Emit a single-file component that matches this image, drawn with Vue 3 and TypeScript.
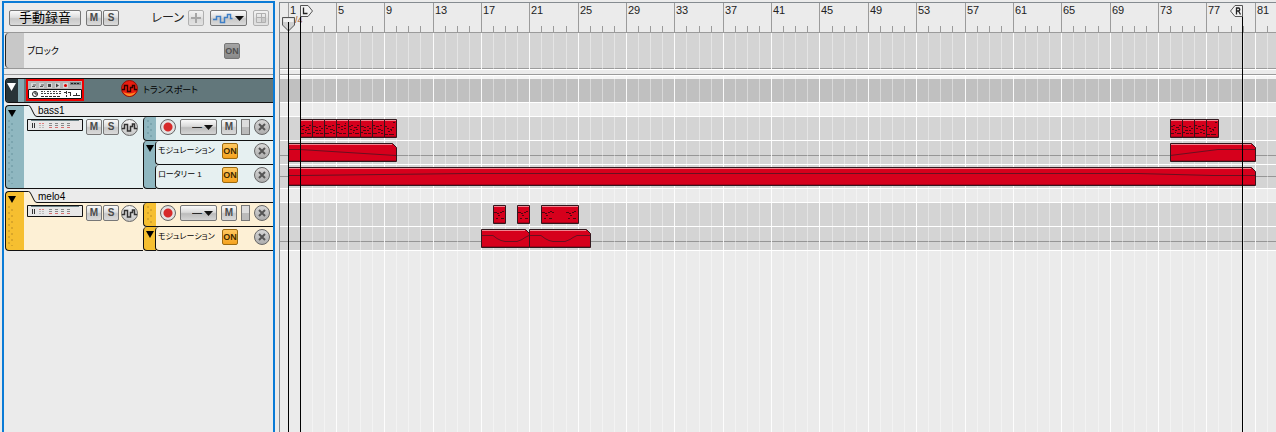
<script setup lang="ts">
interface Lane { label: string; on: boolean }
interface Track { id: string; name: string; tone: string; lanes: Lane[] }
interface Clip { from: number; to: number; notes?: number[][]; curve?: number[][]; cut?: boolean }
interface Row { kind: string; clips: Clip[]; axis?: string }

const BAR = 12.09
const ORIGIN = 8
const LAST = 84
const barX = (n: number): number => Math.floor(ORIGIN + BAR * (n - 1))

const bars = Array.from({ length: LAST }, (_, i) => i + 1)
const labels = bars.filter((n) => n % 4 === 1)

const tracks: Track[] = [
  { id: 'bass', name: 'bass1', tone: 'teal', lanes: [{ label: 'モジュレーション', on: true }, { label: 'ロータリー 1', on: true }] },
  { id: 'melo', name: 'melo4', tone: 'amber', lanes: [{ label: 'モジュレーション', on: true }] },
]

const riffs: number[][][] = [
  [[1, 7, 2], [3, 6, 2], [6, 8, 3], [9, 6, 2], [2, 10, 2], [5, 11, 2], [8, 10, 2], [1, 14, 3], [5, 13, 1], [7, 14, 4]],
  [[1, 7, 3], [4, 8, 2], [7, 7, 2], [9, 9, 2], [3, 11, 3], [7, 11, 2], [1, 13, 2], [4, 14, 3], [8, 14, 3]],
  [[1, 6, 2], [4, 7, 3], [8, 6, 2], [2, 9, 2], [6, 10, 3], [9, 11, 2], [1, 14, 4], [6, 13, 2], [9, 14, 2]],
  [[1, 5, 3], [5, 7, 2], [8, 6, 2], [9, 4, 1], [2, 8, 2], [5, 10, 2], [8, 9, 2], [1, 13, 2], [3, 14, 3], [7, 14, 3]],
]
const ending: number[][] = [[9, 3, 2], [1, 7, 2], [8, 8, 2], [3, 9, 2], [6, 10, 2], [4, 12, 2], [7, 11, 1], [1, 15, 3], [5, 15, 5]]
const phrase: number[][] = [[1, 7, 3], [4, 8, 2], [7, 7, 2], [9, 6, 2], [2, 7, 1], [5, 10, 2], [3, 13, 2], [8, 13, 3]]

const run = (from: number, count: number): Clip[] =>
  Array.from({ length: count }, (_, i) => ({
    from: from + i,
    to: from + i + 1,
    notes: i === count - 1 ? ending : riffs[i % riffs.length],
  }))

const dip = (n: number): number[][] => [
  [0, 6], [12, 6], [16, 9], [20, 11], [24, 12], [36, 12], [41, 10], [44, 8], [48, 6], [n, 6],
]

const rows: Row[] = [
  { kind: 'gap', clips: [] },
  { kind: 'lane', clips: [...run(2, 8), ...run(74, 4)] },
  {
    kind: 'lane',
    axis: 'low',
    clips: [
      { from: 1, to: 10, cut: true, curve: [[0, 6], [12, 6], [108, 12]] },
      { from: 74, to: 81, cut: true, curve: [[0, 12], [48, 6], [85, 6]] },
    ],
  },
  { kind: 'lane', axis: 'mid', clips: [{ from: 1, to: 81, cut: true, curve: [[0, 8], [12, 8], [180, 6], [850, 6], [925, 8], [967, 8]] }] },
  { kind: 'gap', clips: [] },
  {
    kind: 'lane',
    clips: [
      { from: 18, to: 19, notes: phrase },
      { from: 20, to: 21, notes: phrase },
      { from: 22, to: 25, notes: [...phrase, [11, 7, 2], ...phrase.map(([x, y, w]) => [x + 24, y, w])] },
    ],
  },
  {
    kind: 'lane',
    axis: 'low',
    clips: [
      { from: 17, to: 21, cut: true, curve: dip(48) },
      { from: 21, to: 26, cut: true, curve: dip(61) },
    ],
  },
]

const clipW = (c: Clip): number => barX(c.to) - barX(c.from) + 1
const outline = (c: Clip): string => {
  const r = clipW(c) - 0.5
  return c.cut ? `M.5 .5H${r - 4}L${r} 4.5V18.5H.5Z` : `M.5 .5H${r}V18.5H.5Z`
}
const points = (c: Clip): string => (c.curve ?? []).map(([x, y]) => `${x},${y + 0.5}`).join(' ')
</script>

<template>
  <main class="sequencer">
    <aside class="panel">
      <header class="tools">
        <button type="button" class="btn manual">手動録音</button>
        <button type="button" class="btn sq">M</button>
        <button type="button" class="btn sq s">S</button>
        <span class="lane-title">レーン</span>
        <button type="button" class="btn sq faded" aria-label="レーンを追加">
          <svg width="10" height="10" viewBox="0 0 10 10"><path d="M5 0V10M0 5H10" stroke="#666" stroke-width="2" /></svg>
        </button>
        <button type="button" class="btn auto" aria-label="オートメーション" aria-haspopup="menu">
          <svg width="34" height="14" viewBox="0 0 34 14">
            <path d="M1 8.5H4.500V5.500H8.500V11.500H12.500V6.500H15.500V3.500H18.500V7.500H20.500" fill="none" stroke="#3f7fc6" stroke-width="1.500" />
            <path d="M23 5H32L27.500 10Z" fill="#111" />
          </svg>
        </button>
        <button type="button" class="btn sq faded" aria-label="グリッド">
          <svg width="10" height="10" viewBox="0 0 10 10" fill="none" stroke="#777"><path d="M.5 .5H9.500V9.500H.5ZM5.500 .5V9.500M.5 4.500H9.500" /><path d="M6 5H9V9H6Z" fill="#aaa" stroke="none" /></svg>
        </button>
      </header>

      <section class="block">
        <div class="block-handle"></div>
        <span class="jp">ブロック</span>
        <button type="button" class="btn sq on off">ON</button>
      </section>
      <div class="divider"></div>

      <section class="transport">
        <div class="transport-fold">
          <svg width="9" height="8" viewBox="0 0 9 8"><path d="M0 0H9L4.500 8Z" fill="#fff" /></svg>
        </div>
        <div class="transport-edge"></div>
        <svg class="rack" width="58" height="23" viewBox="0 0 58 23">
          <path d="M1 1H57V21H1Z" fill="#efefef" stroke="#f00000" stroke-width="2" />
          <path d="M2 2H56V10H2Z" fill="#b4b4b4" />
          <path d="M5 4H10V9H5ZM13 4H18V9H13ZM21 4H26V9H21ZM29 4H34V9H29ZM37 4H42V9H37Z" fill="#d6d6d6" />
          <path d="M44 3H55V6H44Z" fill="#7d8182" />
          <path d="M6 7.500H9M7 6H10M14 7.500H17M15 6H18" stroke="#555" />
          <path d="M22 5H25V8H22ZM30 4.500L33 6.500L30 8.500Z" fill="#444" />
          <circle cx="39.500" cy="6.500" r="1.500" fill="#d00" />
          <path d="M45 4.500H54" stroke="#222" stroke-dasharray="2 1" />
          <path d="M2.500 10.500H55.500V19.500H2.500Z" fill="#fff" stroke="#111" />
          <circle cx="9" cy="15" r="2.500" fill="none" stroke="#222" />
          <path d="M9 13V15H11" fill="none" stroke="#222" />
          <path d="M15 12.500H19M21 12.500H25M27 12.500H31M33 12.500H35M15 14.500H35" stroke="#444" stroke-dasharray="2 1" />
          <path d="M15 17.500H35M38 13.500H46M40.500 12V18M44.500 14V18M47 16.500H54M50.500 14V18" stroke="#333" stroke-dasharray="3 1" />
        </svg>
        <svg class="wave-red" width="17" height="17" viewBox="0 0 17 17">
          <circle cx="8.500" cy="8.500" r="8" fill="#ea1c10" stroke="#8d1008" />
          <path d="M2 12Q8 15 15 12Q12 16 8.500 16Q5 16 2 12Z" fill="#ff8a20" />
          <path d="M1 9.500H3.500V5.500H6.500V11.500H9.500V7.500H11.500V5.500H13.500V9.500H16" fill="none" stroke="#300" stroke-width="1.400" />
        </svg>
        <span class="jp">トランスポート</span>
      </section>

      <section v-for="t in tracks" :key="t.id" class="track" :class="t.tone">
        <div class="handle">
          <svg width="8" height="7" viewBox="0 0 8 7"><path d="M0 0H8L4 7Z" fill="#000" /></svg>
          <div class="grip"></div>
        </div>
        <div class="track-main">
          <div class="tab">
            <svg width="13" height="12" viewBox="0 0 13 12">
              <path class="tab-fill" d="M0 0H5L12 12H0Z" />
              <path d="M0 .5H4.500Q6 .5 7 3L10 9Q11 11.500 13 11.500" fill="none" stroke="#111" />
            </svg>
            <span class="name">{{ t.name }}</span>
          </div>
          <div class="body">
            <div class="device">
              <svg width="56" height="12" viewBox="0 0 56 12">
                <path d="M.5 .5H55.500V11.500H.5Z" fill="#e8e8e8" stroke="#111" />
                <path d="M4 1.500H52" stroke="#6d8286" />
                <path d="M5.500 4V9M7.500 4V9" stroke="#333" />
                <path d="M12 4.500H18" stroke="#e08080" stroke-dasharray="2 1" /><path d="M12 6.500H18M12 8.500H18" stroke="#bbb" stroke-dasharray="2 1" />
                <path d="M22 4.500H44M22 6.500H44" stroke="#888" stroke-dasharray="3 3" />
                <path d="M22 8.500H44" stroke="#d87070" stroke-dasharray="3 3" />
              </svg>
              <button type="button" class="btn sq">M</button>
              <button type="button" class="btn sq s">S</button>
              <button type="button" class="round wave" :aria-label="`${t.name} オートメーション`">
                <svg width="17" height="17" viewBox="0 0 17 17"><path d="M1 9.500H3.500V5.500H6.500V12H9.500V7.500H11.500V5H13.500V9.500H16" fill="none" stroke="#333" stroke-width="1.500" /></svg>
              </button>
            </div>
            <div class="lanes">
              <div class="lane-group">
                <div class="strip"><div class="grip"></div></div>
                <div class="lane note">
                  <button type="button" class="round rec" :aria-label="`${t.name} 録音`"></button>
                  <span class="pick">
                    <select :aria-label="`${t.name} グルーブ`"><option>—</option></select>
                    <svg width="9" height="5" viewBox="0 0 9 5"><path d="M0 0H9L4.500 5Z" fill="#111" /></svg>
                  </span>
                  <button type="button" class="btn sq">M</button>
                  <span class="meter"></span>
                  <button type="button" class="round close" :aria-label="`${t.name} レーン削除`">
                    <svg width="8" height="8" viewBox="0 0 8 8"><path d="M1 1L7 7M7 1L1 7" stroke="#555" stroke-width="2" /></svg>
                  </button>
                </div>
              </div>
              <div class="lane-group">
                <div class="strip fold">
                  <svg width="8" height="7" viewBox="0 0 8 7"><path d="M0 0H8L4 7Z" fill="#000" /></svg>
                </div>
                <div class="stack">
                  <div v-for="l in t.lanes" :key="l.label" class="lane param">
                    <span class="jp param-name">{{ l.label }}</span>
                    <button type="button" class="btn sq on" :aria-pressed="l.on">ON</button>
                    <button type="button" class="round close" :aria-label="`${l.label} 削除`">
                      <svg width="8" height="8" viewBox="0 0 8 8"><path d="M1 1L7 7M7 1L1 7" stroke="#555" stroke-width="2" /></svg>
                    </button>
                  </div>
                </div>
              </div>
            </div>
          </div>
        </div>
      </section>
    </aside>

    <section class="timeline">
      <div class="ruler">
        <svg width="100%" height="29">
          <path v-for="n in bars" :key="n" :d="`M${barX(n) + 0.5} ${n % 4 === 1 ? 0 : 23}V29`" stroke="#9b9b9b" />
        </svg>
        <span class="meter-sig" :style="{ left: barX(1) + 2 + 'px' }">4/4</span>
        <span v-for="n in labels" :key="n" class="num" :style="{ left: barX(n) + 2 + 'px' }">{{ n }}</span>
      </div>

      <div class="canvas">
        <svg class="grid" width="100%" height="100%">
          <path v-for="n in bars" :key="n" :d="`M${barX(n) + 0.5} 0V4000`" stroke="#fff" :stroke-opacity="n % 4 === 1 ? 0.9 : 0.4" />
        </svg>
        <div class="row block-row"></div>
        <div class="row split"></div>
        <div class="row song"></div>
        <div v-for="(r, i) in rows" :key="i" class="row" :class="[r.kind === 'gap' ? 'gap' : 'clips', r.axis]">
          <svg
            v-for="c in r.clips"
            :key="c.from"
            class="clip"
            height="19"
            :width="clipW(c)"
            :style="{ left: barX(c.from) + 'px' }"
          >
            <path :d="outline(c)" fill="#d6001c" />
            <path :d="`M1 1.5H${clipW(c) - (c.cut ? 5 : 1)}`" stroke="#ef8590" />
            <path :d="`M1 17.5H${clipW(c) - 1}`" stroke="#a80018" />
            <path v-for="(m, k) in c.notes ?? []" :key="k" :d="`M${m[0]} ${m[1] + 0.5}h${m[2]}`" stroke="#4c0710" />
            <polyline v-if="c.curve" :points="points(c)" fill="none" stroke="#691020" />
            <path :d="outline(c)" fill="none" stroke="#33181e" />
          </svg>
        </div>
      </div>

      <div class="cursor" :style="{ left: barX(2) + 'px' }"></div>
      <div class="cursor" :style="{ left: barX(80) - 1 + 'px' }"></div>
      <svg class="flag" width="13" height="12" viewBox="0 0 13 12" :style="{ left: barX(2) + 'px' }">
        <path d="M.5 .5H8L12.500 6L8 11.500H.5Z" fill="#f2f2f2" stroke="#555" />
        <path d="M3.500 2.500V8.500H7.500" fill="none" stroke="#222" stroke-width="1.300" />
      </svg>
      <svg class="flag" width="13" height="12" viewBox="0 0 13 12" :style="{ left: barX(80) - 13 + 'px' }">
        <path d="M12.500 .5H5L.5 6L5 11.500H12.500Z" fill="#f2f2f2" stroke="#555" />
        <path d="M6.500 9.500V3H9Q10.500 4.500 9 6H6.500M8.500 6L10.500 9.500" fill="none" stroke="#222" stroke-width="1.300" />
      </svg>
      <svg class="playhead" width="13" height="15" viewBox="0 0 13 15" :style="{ left: barX(1) - 6 + 'px' }">
        <path d="M.5 .5H12.500V8L6.500 14L.5 8Z" fill="#cfcfcf" stroke="#555" />
        <path d="M1.500 1.500H11.500V5H1.500Z" fill="#f0f0f0" />
      </svg>
      <div class="cursor now" :style="{ left: barX(1) + 'px' }"></div>
    </section>
  </main>
</template>

<style>
body {
  margin: 0;
  background: #ebebeb;
}
</style>

<style scoped>
.sequencer {
  display: flex;
  gap: 4px;
  min-height: 100vh;
  padding-left: 2px;
  box-sizing: border-box;
  overflow: hidden;
  background: #ebebeb;
  color: #000;
  font: 11px/12px "Liberation Sans", "Noto Sans CJK JP", sans-serif;
}
svg { display: block; flex: none; }
button { padding: 0; font: inherit; flex: none; }

.panel {
  flex: 0 0 269px;
  margin-top: 1px;
  border: 2px solid #0a7bd6;
  border-bottom: 0;
}
.tools {
  display: flex;
  align-items: flex-start;
  height: 22px;
  padding: 7px 4px 0 5px;
  border-bottom: 1px solid #989898;
}
.btn {
  display: flex;
  align-items: center;
  justify-content: center;
  height: 16px;
  box-sizing: border-box;
  border: 1px solid #777;
  border-radius: 2px;
  background: linear-gradient(#fafafa, #dedede 45%, #c8c8c8 55%, #dadada);
  color: #4a4a4a;
}
.sq { width: 16px; font-weight: bold; font-size: 10px; }
.s { margin-left: 1px; }
.manual {
  width: 72px;
  margin-right: 5px;
  color: #000;
  font-size: 13px;
}
.lane-title {
  margin: 0 4px 0 auto;
  color: #222;
  font-size: 12px;
  line-height: 16px;
  font-feature-settings: "palt";
}
.faded { opacity: 0.5; }
.auto { width: 37px; margin: 0 6px; }
.jp {
  font-size: 9px;
  white-space: nowrap;
  font-feature-settings: "palt";
}

.block {
  display: flex;
  align-items: center;
  height: 35px;
  margin-left: 1px;
}
.block-handle {
  width: 19px;
  height: 100%;
  box-sizing: border-box;
  margin-right: 3px;
  border-left: 1px solid #222;
  border-radius: 4px 0 0 4px;
  background: #c8c8c8;
}
.on { font-size: 9px; }
.off { margin: 0 33px 0 auto; background: linear-gradient(#a5a5a5, #8a8a8a); color: #505050; }
.divider {
  height: 5px;
  margin-bottom: 3px;
  border: solid #989898;
  border-width: 1px 0;
}

.transport {
  display: flex;
  height: 23px;
  margin: 0 0 2px 1px;
  border: solid #111;
  border-width: 1px 0 1px 1px;
  border-radius: 4px 0 0 4px;
  overflow: hidden;
  background: #62777b;
  line-height: 23px;
}
.transport-fold { width: 12px; padding: 4px 0 0 1px; box-sizing: border-box; background: #283438; }
.transport-edge { width: 6px; margin-right: 2px; background: #84aab3; }
.wave-red { margin: 1px 5px 0 37px; }

.track { display: flex; margin: 0 0 2px 1px; }
.teal { --handle: #8fb7c0; --body: #e6f0f1; --dot: #7ba5af; }
.amber { --handle: #f6bf30; --body: #fdf0d5; --dot: #d9a62a; }
.handle {
  display: flex;
  flex-direction: column;
  gap: 3px;
  width: 19px;
  box-sizing: border-box;
  padding: 4px 0 4px 2px;
  border: solid #111;
  border-width: 1px 0 1px 1px;
  border-radius: 4px 0 0 4px;
  background: var(--handle);
}
.grip {
  flex: 1;
  max-width: 6px;
  background:
    radial-gradient(circle at 1px 1px, var(--dot) 1px, transparent 1px) 0 0 / 6px 6px,
    radial-gradient(circle at 4px 4px, var(--dot) 1px, transparent 1px) 0 0 / 6px 6px;
}
.track-main { flex: 1; min-width: 0; }
.tab { display: flex; background: #ebebeb; }
.tab-fill { fill: var(--body); }
.name {
  flex: 1;
  height: 11px;
  padding-left: 1px;
  border-bottom: 1px solid #111;
  font-size: 10px;
  line-height: 11px;
}
.body { display: flex; background: var(--body); }
.device {
  display: flex;
  align-items: flex-start;
  width: 119px;
  box-sizing: border-box;
  padding: 2px 0 0 3px;
  border-bottom: 1px solid #111;
}
.device > svg { margin-right: 3px; }
.round {
  display: flex;
  align-items: center;
  justify-content: center;
  width: 16px;
  height: 16px;
  box-sizing: border-box;
  border: 1px solid #666;
  border-radius: 50%;
  background: linear-gradient(#f4f4f4, #c6c6c6);
}
.wave { width: 17px; height: 17px; margin-left: 2px; }
.rec { background: radial-gradient(circle, #d62a2a 4px, #e6e6e6 5px, #cfcfcf); }
.close { background: linear-gradient(#d8d8d8, #adadad); }
.lanes { flex: 1; min-width: 0; }
.lane-group { display: flex; }
.strip {
  display: flex;
  width: 13px;
  box-sizing: border-box;
  padding: 3px 0 3px 3px;
  border: solid #111;
  border-width: 0 0 1px 1px;
  border-radius: 4px 0 0 4px;
  background: var(--handle);
}
.fold { padding: 4px 0 0 2px; }
.lane {
  display: flex;
  align-items: flex-start;
  flex: 1;
  height: 24px;
  box-sizing: border-box;
  padding: 2px 3px 0 4px;
  border-bottom: 1px solid #111;
}
.note { justify-content: space-between; }
.stack { flex: 1; min-width: 0; margin-left: -1px; }
.param {
  padding-left: 2px;
  border-left: 1px solid #111;
  border-radius: 4px 0 0 4px;
  background: var(--body);
}
.param-name { flex: 1; font-size: 8px; line-height: 16px; }
.param .on {
  margin-right: 16px;
  border-color: #9c6a10;
  background: linear-gradient(#ffc860, #f5a21e);
  color: #3f2a00;
}
.pick { position: relative; }
.pick select {
  display: block;
  appearance: none;
  width: 37px;
  height: 16px;
  padding: 0 0 0 11px;
  border: 1px solid #777;
  border-radius: 2px;
  background: linear-gradient(#fafafa, #dadada 45%, #bcbcbc 55%, #d4d4d4);
  color: #000;
  font: 10px/14px "Liberation Sans", sans-serif;
}
.pick svg { position: absolute; right: 4px; top: 6px; pointer-events: none; }
.meter {
  width: 9px;
  height: 16px;
  box-sizing: border-box;
  border: 1px solid #777;
  background: linear-gradient(#ddd 50%, #bbb 50%);
}

.timeline {
  position: relative;
  display: flex;
  flex-direction: column;
  flex: 1;
  min-width: 0;
  margin-top: 2px;
  border: solid #858b90;
  border-width: 1px 0 0 1px;
  overflow: hidden;
}
.ruler { position: relative; height: 29px; border-bottom: 1px solid #9b9b9b; }
.num { position: absolute; top: 1px; color: #222; }
.meter-sig { position: absolute; top: 11px; color: #a0500c; font-size: 9px; }
.canvas { position: relative; flex: 1; }
.grid { position: absolute; inset: 0; z-index: 1; }
.row { box-sizing: border-box; height: 24px; border-bottom: 1px solid #fff; background: #d4d4d4; }
.block-row { height: 36px; border-color: #9b9b9b; }
.split {
  position: relative;
  z-index: 2;
  height: 7px;
  border: solid #fff;
  border-width: 1px 0;
  background: linear-gradient(#ebebeb 4px, #9b9b9b 4px);
}
.song { height: 27px; border-top: 3px solid #f4f4f4; background: #c0c0c0; }
.gap { height: 14px; background: #ebebeb; }
.clips { position: relative; }
.low { background: linear-gradient(#d4d4d4 14px, #969696 14px, #969696 15px, #d4d4d4 15px); }
.mid { background: linear-gradient(#d4d4d4 11px, #969696 11px, #969696 12px, #d4d4d4 12px); }
/* Row backgrounds sit below the bar lines, clips above them. */
.clip { position: absolute; top: 2px; z-index: 2; }
.clips { z-index: auto; }
.grid { pointer-events: none; }
.cursor { position: absolute; top: 3px; bottom: 0; width: 1px; background: #000; z-index: 3; }
.now { top: 19px; z-index: 5; }
.flag { position: absolute; top: 2px; z-index: 4; }
.playhead { position: absolute; top: 14px; z-index: 4; }
</style>
